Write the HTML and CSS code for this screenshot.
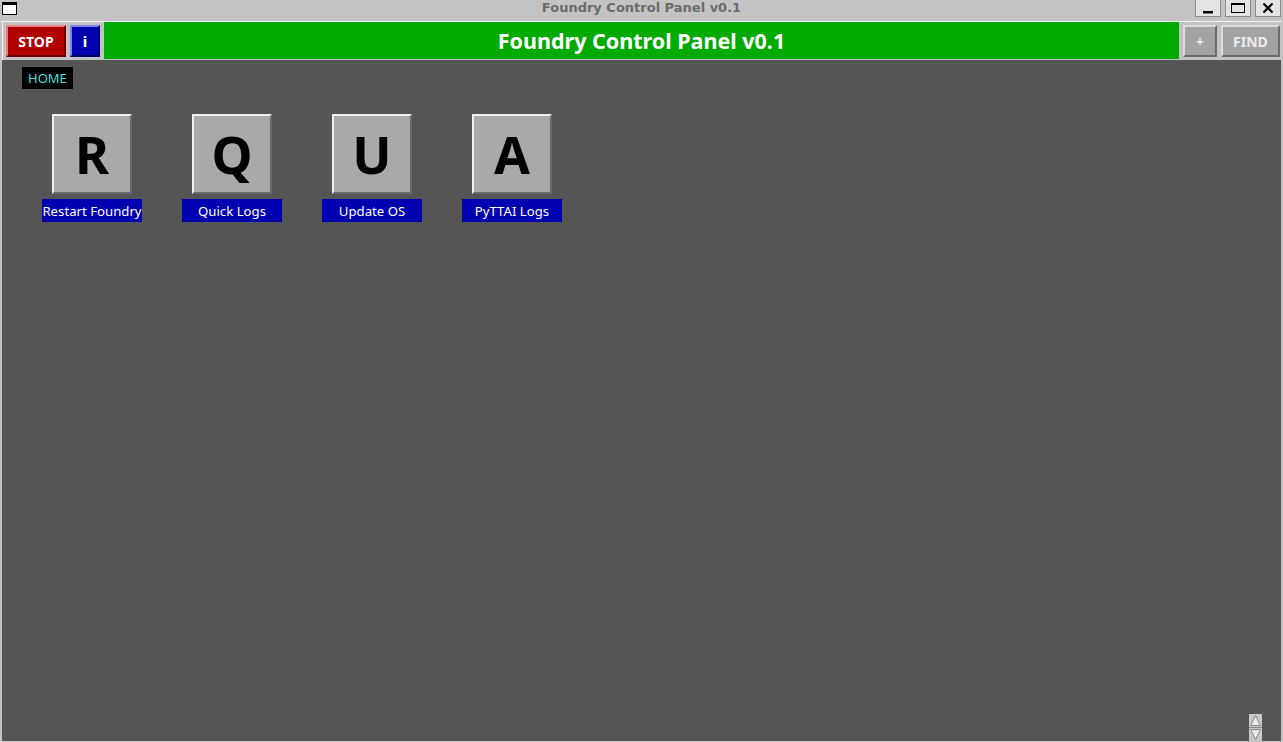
FILE: index.html
```html
<!DOCTYPE html>
<html>
<head>
<meta charset="utf-8">
<title>Foundry Control Panel v0.1</title>
<link rel="stylesheet" href="styles.css">
</head>
<body>
<div class="window">
  <div class="titlebar">
    <div class="win-icon"></div>
    <div class="win-title">Foundry Control Panel v0.1</div>
    <div class="win-buttons">
      <div class="win-btn"><svg width="14" height="12" viewBox="0 0 14 12"><rect x="2" y="9" width="10" height="2.5" fill="#000"/></svg></div>
      <div class="win-btn"><svg width="16" height="12" viewBox="0 0 16 12"><rect x="1.5" y="1.5" width="13" height="9" fill="none" stroke="#000" stroke-width="1"/><rect x="1" y="1" width="14" height="2" fill="#000"/></svg></div>
      <div class="win-btn"><svg width="14" height="12" viewBox="0 0 14 12"><path d="M2.5 1.5 L11.5 10.5 M11.5 1.5 L2.5 10.5" stroke="#000" stroke-width="2.2"/></svg></div>
    </div>
  </div>
  <div class="frame">
    <div class="toolbar">
      <div class="btn btn-stop">STOP</div>
      <div class="btn btn-info">i</div>
      <div class="banner">Foundry Control Panel v0.1</div>
      <div class="btn btn-gray btn-plus">+</div>
      <div class="btn btn-gray btn-find">FIND</div>
    </div>
    <div class="main">
      <div class="crumb">HOME</div>
      <div class="tiles">
        <div class="tile">
          <div class="tile-btn">R</div>
          <div class="tile-label">Restart Foundry</div>
        </div>
        <div class="tile">
          <div class="tile-btn">Q</div>
          <div class="tile-label">Quick Logs</div>
        </div>
        <div class="tile">
          <div class="tile-btn">U</div>
          <div class="tile-label">Update OS</div>
        </div>
        <div class="tile">
          <div class="tile-btn">A</div>
          <div class="tile-label">PyTTAI Logs</div>
        </div>
      </div>
      <div class="scroller">
        <svg width="13" height="27" viewBox="0 0 13 27">
          <rect x="0" y="0" width="13" height="27" fill="#c8c8c8"/>
          <path d="M6.5 1.5 L11.5 11.5 L1.5 11.5 Z" fill="#e8e8e8" stroke="#888" stroke-width="1"/>
          <path d="M1.5 15.5 L11.5 15.5 L6.5 25.5 Z" fill="#e8e8e8" stroke="#888" stroke-width="1"/>
          <line x1="0" y1="13.5" x2="13" y2="13.5" stroke="#888" stroke-width="1"/>
        </svg>
      </div>
    </div>
  </div>
</div>
</body>
</html>
```

FILE: styles.css
```css
html, body {
  margin: 0;
  padding: 0;
  width: 1283px;
  height: 742px;
  overflow: hidden;
  background: #c3c3c3;
}

.window {
  width: 1283px;
  height: 742px;
  display: flex;
  flex-direction: column;
}

.titlebar {
  height: 21px;
  flex: none;
  background: #c3c3c3;
  display: flex;
  align-items: flex-start;
  position: relative;
}

.win-icon {
  margin: 2px 0 0 2px;
  width: 13px;
  height: 9px;
  background: #fff;
  border: 1px solid #000;
  border-top-width: 3px;
}

.win-title {
  position: absolute;
  left: 0;
  right: 0;
  top: 0;
  text-align: center;
  font-family: "DejaVu Sans", sans-serif;
  font-weight: bold;
  font-size: 13px;
  line-height: 16px;
  color: #6b6b6b;
  pointer-events: none;
}

.win-buttons {
  display: flex;
  gap: 4px;
  padding-right: 2px;
  margin-left: auto;
}

.win-btn {
  width: 24px;
  height: 16px;
  background: #e4e4e4;
  border: 1px solid #8c8c8c;
  border-top: none;
  display: flex;
  align-items: center;
  justify-content: center;
  box-sizing: content-box;
}

.frame {
  flex: 1;
  display: flex;
  flex-direction: column;
  border-top: 1px solid #f4f4f4;
  border-left: 2px solid #c3c3c3;
  border-right: 2px solid #c3c3c3;
  border-bottom: 1px solid #c3c3c3;
  min-height: 0;
}

.toolbar {
  height: 38px;
  flex: none;
  display: flex;
  align-items: stretch;
  background: #c3c3c3;
  border-left: 1px solid #f4f4f4;
  box-sizing: border-box;
  padding-left: 3px;
}

.btn {
  margin-top: 3px;
  margin-bottom: 3px;
  display: flex;
  align-items: center;
  justify-content: center;
  font-family: "Noto Sans", sans-serif;
  font-weight: bold;
  font-size: 14px;
  color: #fff;
  box-sizing: border-box;
  border: 2px solid;
}

.btn-stop {
  width: 60px;
  background: #b00000;
  border-color: #e88080 #700000 #700000 #e88080;
}

.btn-info {
  width: 30px;
  margin-left: 4px;
  background: #0000b0;
  border-color: #8080e8 #000070 #000070 #8080e8;
  font-size: 15px;
}

.banner {
  flex: 1;
  margin-left: 4px;
  margin-top: 0;
  margin-bottom: 1px;
  background: #00aa00;
  color: #fff;
  font-family: "Noto Sans", sans-serif;
  font-weight: bold;
  font-size: 21.5px;
  display: flex;
  align-items: center;
  justify-content: center;
}

.btn-gray {
  background: #a3a3a3;
  border-color: #dcdcdc #6c6c6c #6c6c6c #dcdcdc;
  color: #ececec;
}

.btn-plus {
  width: 34px;
  margin-left: 4px;
}

.btn-find {
  width: 59px;
  margin-left: 4px;
  margin-right: 1px;
}

.main {
  flex: 1;
  background: #555555;
  position: relative;
  padding: 7px 0 0 20px;
  min-height: 0;
}

.crumb {
  display: inline-block;
  background: #000;
  color: #4fdede;
  font-family: "Noto Sans", sans-serif;
  font-size: 13px;
  line-height: 22px;
  height: 22px;
  padding: 0 6px;
}

.tiles {
  display: flex;
  gap: 40px;
  margin-top: 25px;
  padding-left: 20px;
}

.tile {
  width: 100px;
  display: flex;
  flex-direction: column;
  align-items: center;
}

.tile-btn {
  width: 80px;
  height: 80px;
  box-sizing: border-box;
  background: #a9a9a9;
  border: 2px solid;
  border-color: #f0f0f0 #6a6a6a #6a6a6a #f0f0f0;
  display: flex;
  align-items: center;
  justify-content: center;
  font-family: "Noto Sans", sans-serif;
  font-weight: bold;
  font-size: 52px;
  color: #000;
  line-height: 1;
}

.tile-label {
  margin-top: 5px;
  width: 100px;
  height: 23px;
  background: #0000b0;
  color: #fff;
  font-family: "Noto Sans", sans-serif;
  font-size: 13.2px;
  line-height: 25px;
  text-align: center;
  white-space: nowrap;
  overflow: hidden;
}

.scroller {
  position: absolute;
  right: 19px;
  bottom: 0;
  width: 13px;
  height: 27px;
}

.scroller svg {
  display: block;
}
```
